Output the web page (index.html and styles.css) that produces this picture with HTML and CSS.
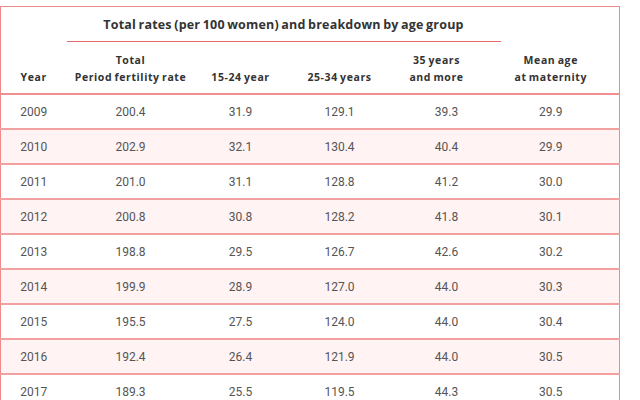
FILE: index.html
```html
<!DOCTYPE html>
<html lang="en">
<head>
<meta charset="utf-8">
<title>Fertility rates</title>
<link rel="stylesheet" href="styles.css">
</head>
<body>
<table class="rates">
  <colgroup>
    <col class="c-year">
    <col class="c-total">
    <col class="c-a">
    <col class="c-b">
    <col class="c-c">
    <col class="c-mean">
  </colgroup>
  <thead>
    <tr class="title-row">
      <th></th>
      <th colspan="4" class="title">Total rates (per 100 women) and breakdown by age group</th>
      <th></th>
    </tr>
    <tr class="label-row">
      <th>Year</th>
      <th>Total<br>Period fertility rate</th>
      <th>15-24 year</th>
      <th>25-34 years</th>
      <th class="shift">35 years<br>and more</th>
      <th class="last">Mean age<br>at maternity</th>
    </tr>
  </thead>
  <tbody>
    <tr><td>2009</td><td>200.4</td><td>31.9</td><td>129.1</td><td>39.3</td><td class="last">29.9</td></tr>
    <tr><td>2010</td><td>202.9</td><td>32.1</td><td>130.4</td><td>40.4</td><td class="last">29.9</td></tr>
    <tr><td>2011</td><td>201.0</td><td>31.1</td><td>128.8</td><td>41.2</td><td class="last">30.0</td></tr>
    <tr><td>2012</td><td>200.8</td><td>30.8</td><td>128.2</td><td>41.8</td><td class="last">30.1</td></tr>
    <tr><td>2013</td><td>198.8</td><td>29.5</td><td>126.7</td><td>42.6</td><td class="last">30.2</td></tr>
    <tr><td>2014</td><td>199.9</td><td>28.9</td><td>127.0</td><td>44.0</td><td class="last">30.3</td></tr>
    <tr><td>2015</td><td>195.5</td><td>27.5</td><td>124.0</td><td>44.0</td><td class="last">30.4</td></tr>
    <tr><td>2016</td><td>192.4</td><td>26.4</td><td>121.9</td><td>44.0</td><td class="last">30.5</td></tr>
    <tr><td>2017</td><td>189.3</td><td>25.5</td><td>119.5</td><td>44.3</td><td class="last">30.5</td></tr>
  </tbody>
</table>
</body>
</html>
```
FILE: styles.css
```css
html, body {
  margin: 0;
  padding: 0;
  background: #ffffff;
}
body {
  padding-top: 6px;
  font-family: Roboto, "Liberation Sans", sans-serif;
}
.rates {
  width: 620px;
  table-layout: fixed;
  border-collapse: collapse;
  border: 1.5px solid #ef8a8a;
}
.c-year { width: 66px; }
.c-total { width: 128px; }
.c-a { width: 92px; }
.c-b { width: 106px; }
.c-c { width: 108px; }
.c-mean { width: 119px; }

.rates th {
  font-family: "Open Sans", "DejaVu Sans", sans-serif;
  font-weight: 700;
  color: #333333;
  text-align: center;
  padding: 0;
}
.title-row th {
  height: 34px;
  vertical-align: middle;
}
.title {
  font-size: 12.5px;
  letter-spacing: 0.2px;
  word-spacing: -1px;
  border-bottom: 1.5px solid #e46a6a;
}
.label-row th {
  font-size: 10.5px;
  letter-spacing: 0.6px;
  word-spacing: -1px;
  line-height: 17px;
  vertical-align: bottom;
  padding: 0 0 7px 0;
  height: 44px;
  border-bottom: 2px solid #f09090;
}
.label-row th.shift {
  padding-right: 20px;
}
.rates .last {
  padding-right: 18px;
}
.rates td {
  font-size: 12px;
  color: #555555;
  text-align: center;
  height: 33px;
  padding: 0;
  border-bottom: 2px solid #f3a0a0;
}
.rates tbody tr:nth-child(even) td {
  background: #fff3f3;
}
```
